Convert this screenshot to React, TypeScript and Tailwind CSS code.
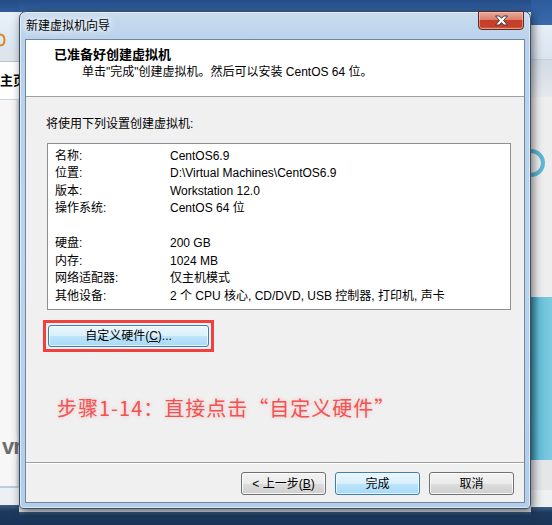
import React from "react";

const FONT = { fontFamily: '"Liberation Sans","Noto Sans CJK SC",sans-serif' };

function CloseGlyph() {
  return (
    <svg width="15" height="11" viewBox="0 0 15 11">
      <path
        d="M1.5 1 L5.3 1 L7.5 3.4 L9.7 1 L13.5 1 L9.5 5.5 L13.5 10 L9.7 10 L7.5 7.6 L5.3 10 L1.5 10 L5.5 5.5 Z"
        fill="#ffffff"
        stroke="#3b3b3b"
        strokeWidth="1"
        strokeLinejoin="round"
      />
    </svg>
  );
}

function WinButton({ children, primary }: { children: React.ReactNode; primary?: boolean }) {
  return (
    <div
      className={
        primary
          ? "flex h-[23px] w-[85px] items-center justify-center rounded-[3px] border border-[#3c7fb1] bg-[linear-gradient(#eaf6fd_0%,#d9f0fc_50%,#bee6fd_50%,#a7d9f5_100%)] text-[12px] text-black shadow-[inset_0_0_0_1px_rgba(255,255,255,0.7)]"
          : "flex h-[23px] w-[85px] items-center justify-center rounded-[3px] border border-[#707070] bg-[linear-gradient(#f2f2f2_0%,#ebebeb_50%,#dddddd_50%,#cfcfcf_100%)] text-[12px] text-black shadow-[inset_0_0_0_1px_rgba(255,255,255,0.8)]"
      }
    >
      {children}
    </div>
  );
}

export default function App() {
  const rows1: [string, string][] = [
    ["名称:", "CentOS6.9"],
    ["位置:", "D:\\Virtual Machines\\CentOS6.9"],
    ["版本:", "Workstation 12.0"],
    ["操作系统:", "CentOS 64 位"],
  ];
  const rows2: [string, string][] = [
    ["硬盘:", "200 GB"],
    ["内存:", "1024 MB"],
    ["网络适配器:", "仅主机模式"],
    ["其他设备:", "2 个 CPU 核心, CD/DVD, USB 控制器, 打印机, 声卡"],
  ];

  const Row = ({ k, v }: { k: string; v: string }) => (
    <div className="flex h-[17.5px] items-center text-[12px] text-black">
      <span className="w-[115px] shrink-0">{k}</span>
      <span className="whitespace-nowrap">{v}</span>
    </div>
  );

  return (
    <div className="relative h-[525px] w-[552px] overflow-hidden bg-[#f2f3f5]" style={FONT}>
      {/* desktop backdrop */}
      <div className="flex h-full w-full">
        {/* left strip */}
        <div className="flex w-[19px] shrink-0 flex-col">
          <div className="h-[12px] bg-[linear-gradient(#254c86,#2f5c9a)]" />
          <div className="flex h-[38px] items-end overflow-hidden bg-[linear-gradient(#e9f0f8,#dbe6f2)] pb-[3px]">
            <svg width="6" height="14" viewBox="0 0 6 14">
              <path d="M0 1.5 Q4.5 1.5 4.5 7 Q4.5 12.5 0 12.5" fill="none" stroke="#d9891e" strokeWidth="2" />
            </svg>
          </div>
          <div className="h-[12px] border-b border-[#b9c4d1] bg-[#dfe5ec]" />
          <div className="flex h-[38px] w-[40px] items-center border-b border-[#cdd5de] bg-white">
            <span className="whitespace-nowrap text-[13px] font-bold text-black">主页</span>
          </div>
          <div className="h-[334px] bg-[linear-gradient(90deg,#f7f7f7_80%,#c9d6e4)]" />
          <div className="flex h-[26px] w-[40px] items-center bg-[linear-gradient(90deg,#f7f7f7_40%,#c9d6e4_47%)]">
            <span className="ml-[2px] text-[22px] font-bold leading-none tracking-[-1px] text-[#6d6d6d]">vm</span>
          </div>
          <div className="h-[26px] bg-[linear-gradient(90deg,#f7f7f7_80%,#c9d6e4)]" />
          <div className="h-[2px] bg-[#b8cce2]" />
          <div className="h-[17px] bg-[#eceff3]" />
          <div className="flex-1 bg-[linear-gradient(#3f5f86_0%,#1d3a60_30%,#1a3456_100%)]" />
        </div>
        {/* middle */}
        <div className="flex flex-1 flex-col">
          <div className="h-[12px] bg-[linear-gradient(#254c86,#3264a3)]" />
          <div className="flex-1 bg-[#e9eef4]" />
          <div className="h-[4px] bg-[#dfe3e8]" />
          <div className="h-[13px] bg-[linear-gradient(#3f5f86_0%,#1d3a60_30%,#1a3456_100%)]" />
        </div>
        {/* right strip */}
        <div className="flex w-[21px] shrink-0 flex-col overflow-hidden">
          <div className="h-[25px] bg-[linear-gradient(#2c5b9c,#3a6bab)]" />
          <div className="h-[35px] border-b border-[#c3cfdc] bg-[linear-gradient(#e6eef7,#dae4ef)]" />
          <div className="h-[37px] bg-[linear-gradient(#d3dae4,#e6e9ee)]" />
          <div className="relative h-[200px] bg-[#eeeeee]">
            <div className="absolute left-[-14px] top-[52px] h-[28px] w-[28px] rounded-full border-[4px] border-[#5db7d6]" />
          </div>
          <div className="h-[163px] bg-[linear-gradient(90deg,#3f97b7,#67c0da_40%,#7fcbe0)]" />
          <div className="h-[30px] bg-[#e4e6e8]" />
          <div className="h-[17px] bg-[#eef0f2]" />
          <div className="flex-1 bg-[linear-gradient(#3f5f86_0%,#1d3a60_30%,#1a3456_100%)]" />
        </div>
      </div>

      {/* dialog window */}
      <div className="absolute left-[19px] top-[11px] flex h-[498px] w-[512px] flex-col rounded-t-[7px] rounded-b-[4px] border border-[#3b4d63] bg-[linear-gradient(180deg,#c9dcef_0%,#b9d1ea_6%,#bcd3eb_50%,#b4cde8_100%)] px-[5px] pb-[5px] shadow-[2px_3px_10px_rgba(0,0,0,0.55),inset_0_0_0_1px_rgba(255,255,255,0.55)]">
        {/* title bar */}
        <div className="relative flex h-[27px] shrink-0 items-center pl-[1px]">
          <span className="text-[12px] text-black [text-shadow:0_0_6px_#ffffff,0_0_10px_#ffffff]">新建虚拟机向导</span>
          <div className="absolute right-[1px] top-[-1px] flex h-[19px] w-[46px] items-center justify-center rounded-b-[4px] border border-[#5b2a23] bg-[linear-gradient(#eaa99b_0%,#d9806d_45%,#c4402a_50%,#c83f28_85%,#d86a50_100%)] shadow-[inset_0_0_0_1px_rgba(255,210,200,0.5)]">
            <CloseGlyph />
          </div>
        </div>

        {/* client */}
        <div className="flex flex-1 flex-col border border-[#6f87a4] bg-[#f0f0f0]">
          {/* header */}
          <div className="h-[57px] shrink-0 border-b border-[#a0a0a0] bg-white pt-[7px]">
            <div className="pl-[28px] text-[13px] font-bold leading-[16px] text-black">已准备好创建虚拟机</div>
            <div className="mt-[1px] pl-[56px] text-[12px] leading-[16px] text-black">
              单击"完成"创建虚拟机。然后可以安装 CentOS 64 位。
            </div>
          </div>

          {/* body */}
          <div className="flex flex-1 flex-col pl-[20px] pt-[19px]">
            <div className="text-[12px] leading-[16px] text-black">将使用下列设置创建虚拟机:</div>
            <div className="ml-[1px] mt-[11px] h-[167px] w-[464px] border border-[#8d8f94] bg-white pl-[7px] pt-[3px]">
              {rows1.map(([k, v]) => (
                <Row key={k} k={k} v={v} />
              ))}
              <div className="h-[17.5px]" />
              {rows2.map(([k, v]) => (
                <Row key={k} k={k} v={v} />
              ))}
            </div>

            <div className="ml-[-3px] mt-[10px] w-[171px] border-[3px] border-[#f0413f] p-[2px]">
              <div className="flex h-[22px] w-[161px] items-center justify-center rounded-[3px] border border-[#3c7fb1] bg-[linear-gradient(#eaf6fd_0%,#d9f0fc_50%,#bee6fd_50%,#a7d9f5_100%)] text-[12px] text-black shadow-[inset_0_0_0_1px_rgba(255,255,255,0.7)]">
                自定义硬件(<span className="underline">C</span>)...
              </div>
            </div>

            <div
              className="ml-[11px] mt-[42px] whitespace-nowrap text-[20px] font-normal leading-[28px] tracking-[1px] text-[#f25252] [text-shadow:0_0_4px_rgba(240,90,90,0.3)]"
              style={{ fontFamily: '"Noto Sans CJK SC",sans-serif' }}
            >
              步骤1-14：直接点击“自定义硬件”
            </div>
          </div>

          {/* footer */}
          <div className="flex h-[40px] shrink-0 justify-end gap-[9px] border-t border-[#a0a0a0] pr-[10px] pt-[9px] shadow-[inset_0_1px_0_#ffffff]">
            <WinButton>
              &lt; 上一步(<span className="underline">B</span>)
            </WinButton>
            <WinButton primary>完成</WinButton>
            <WinButton>取消</WinButton>
          </div>
        </div>
      </div>
    </div>
  );
}
